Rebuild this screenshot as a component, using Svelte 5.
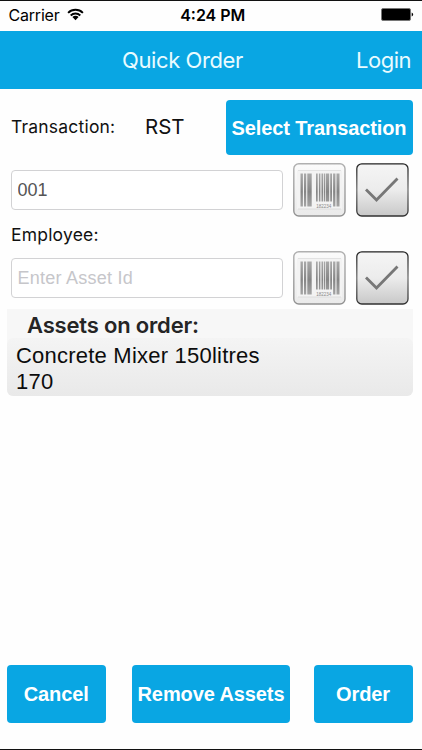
<script>
  let transaction = $state('001');
  let asset = $state('');
  const bars = [
    [7.5, 2.4, 33], [11, 2.2, 33], [14.3, 4.4, 33], [23, 1.7, 28], [25.9, 1.5, 28],
    [28.5, 1.7, 28], [31, 1.2, 28], [32.9, 3.3, 28], [37.2, 1.8, 28],
    [40.1, 2.3, 33], [43.5, 3, 33]
  ];
</script>

{#snippet scan()}
  <button class="tool scan" aria-label="Scan barcode">
    <svg width="53" height="54" viewBox="0 0 53 54">
      <defs>
        <linearGradient id="ink" gradientUnits="userSpaceOnUse" x1="0" y1="10" x2="0" y2="44">
          <stop offset="0" stop-color="#aaa" /><stop offset=".55" stop-color="#858585" /><stop offset="1" stop-color="#a5a5a5" />
        </linearGradient>
        <linearGradient id="edge" x1="0" y1="0" x2="0" y2="1">
          <stop offset="0" stop-color="#b0b0b0" /><stop offset="1" stop-color="#929292" />
        </linearGradient>
        <linearGradient id="face" x1="0" y1="0" x2="0" y2="1">
          <stop offset="0" stop-color="#fbfbfb" /><stop offset="1" stop-color="#eaeaea" />
        </linearGradient>
      </defs>
      <rect x=".8" y=".8" width="51.2" height="52.2" rx="5" fill="url(#face)" stroke="url(#edge)" stroke-width="1.4" />
      <path d="M4 7.5h45v38.5H4z" fill="#f3f3f3" />
      <path d="M5 7.5h43" stroke="#e2e2e2" />
      <path d="M5 46h43" stroke="#dcdcdc" />
      {#each bars as [x, w, h]}
        <rect {x} y="10.5" width={w} height={h} fill="url(#ink)" />
      {/each}
      <text x="23.3" y="44.5" textLength="15" lengthAdjust="spacingAndGlyphs">182234</text>
    </svg>
  </button>
{/snippet}

{#snippet confirm()}
  <button class="tool confirm" aria-label="Confirm">
    <svg width="53" height="54" viewBox="0 0 53 54">
      <defs>
        <linearGradient id="tile" x1="0" y1="0" x2="0" y2="1">
          <stop offset="0" stop-color="#f5f5f5" /><stop offset=".5" stop-color="#ececec" /><stop offset="1" stop-color="#c8c8c8" />
        </linearGradient>
        <linearGradient id="rim" x1="0" y1="0" x2="0" y2="1">
          <stop offset="0" stop-color="#222" /><stop offset=".5" stop-color="#707070" /><stop offset="1" stop-color="#303030" />
        </linearGradient>
      </defs>
      <rect x=".8" y=".8" width="51.2" height="52.2" rx="5" fill="url(#tile)" stroke="url(#rim)" stroke-width="1.3" />
      <path d="M10 26.5 20.5 37 41.5 15.5" fill="none" stroke="#777" stroke-width="2.8" />
    </svg>
  </button>
{/snippet}

<div class="screen">
  <div class="status">
    <div class="carrier">
      <span>Carrier</span>
      <svg width="17" height="13" viewBox="0 0 17 13">
        <g fill="none" stroke="#000" stroke-width="1.9">
          <path d="M1.1 4.8a10.5 10.5 0 0 1 14.8 0" />
          <path d="M3.7 7.5a6.8 6.8 0 0 1 9.6 0" />
        </g>
        <path d="M5.4 9.1a4.4 4.4 0 0 1 6.2 0L8.5 12.2z" />
      </svg>
    </div>
    <time>4:24 PM</time>
    <svg class="battery" width="33" height="14" viewBox="0 0 33 14">
      <rect x=".5" y=".5" width="29" height="12" rx="1.5" stroke="#777" />
      <path d="M30.7 4.5q1.4.5 1.4 2t-1.4 2z" />
    </svg>
  </div>

  <header>
    <h1>Quick Order</h1>
    <span class="login">Login</span>
  </header>

  <main>
    <div class="transaction">
      <label for="transaction">Transaction:</label>
      <span class="code">RST</span>
      <button class="primary select"><span>Select Transaction</span></button>
    </div>
    <div class="entry">
      <input id="transaction" bind:value={transaction} />
      {@render scan()}
      {@render confirm()}
    </div>
    <label class="employee" for="asset">Employee:</label>
    <div class="entry">
      <input id="asset" placeholder="Enter Asset Id" bind:value={asset} />
      {@render scan()}
      {@render confirm()}
    </div>
    <section>
      <h2>Assets on order:</h2>
      <div class="item">
        <div class="name">Concrete Mixer 150litres</div>
        <div class="number">170</div>
      </div>
    </section>
  </main>

  <footer>
    <button class="primary cancel"><span>Cancel</span></button>
    <button class="primary remove"><span>Remove Assets</span></button>
    <button class="primary order"><span>Order</span></button>
  </footer>
</div>

<style>
  :global(body) { margin: 0; background: #fff; }
  * { box-sizing: border-box; }
  .screen {
    width: 422px; height: 750px; display: flex; flex-direction: column;
    border-top: 1px solid #111; border-bottom: 1px solid #111;
    background: #fefefe; color: #111; white-space: nowrap;
    font-family: "Liberation Sans", Arial, sans-serif;
  }
  button { padding: 0; border: 0; font-family: inherit; }
  .status {
    height: 30px; display: grid; grid-template-columns: 1fr auto 1fr; align-items: center;
    padding: 0 8px 0 8.5px; font: 16px/28px Inter, sans-serif; color: #000;
  }
  .carrier { display: flex; align-items: center; gap: 7px; height: 28px; align-self: start; letter-spacing: -.2px; }
  .carrier svg { margin-top: -2px; }
  time { font-weight: 600; align-self: start; padding-left: 3px; letter-spacing: 0; }
  .battery { justify-self: end; margin: 0 0 3px; }
  header {
    height: 58px; flex: none; background: #09a6e3; color: #e9fbff;
    display: flex; align-items: center; justify-content: space-between;
    padding: 0 11px 0 122px; font: 22px/58px Inter, sans-serif; letter-spacing: -.4px;
  }
  h1 { margin: 0; font: inherit; }
  .login { letter-spacing: -.5px; }
  main { flex: 1; padding-top: 11px; }
  .transaction { display: flex; align-items: center; height: 55px; padding: 0 9.5px 0 11px; }
  label { font: 17.5px/20px Inter, sans-serif; letter-spacing: .2px; }
  .transaction label { width: 134px; margin-bottom: 2px; }
  .code { font: 20.5px/24px Inter, sans-serif; margin-bottom: 2px; }
  .primary {
    display: flex; align-items: center; justify-content: center;
    background: #09a6e3; color: #fff; border-radius: 4px;
    font-size: 20px; font-weight: 700; line-height: 24px; letter-spacing: -.1px;
  }
  .select { width: 187px; height: 55px; margin-left: auto; }
  .entry { display: flex; align-items: center; height: 54px; padding-left: 11px; }
  .transaction + .entry { margin-top: 8px; }
  input {
    width: 272px; height: 40px; border: 1px solid #d2d2d4; border-radius: 4px;
    padding: 0 5.5px; margin: 0 9.5px 0 0; background: #fff; color: #555; outline: 0;
    font: 18px "Liberation Sans", Arial, sans-serif;
  }
  input::placeholder { color: #c6c6ca; opacity: 1; letter-spacing: .25px; }
  .tool { display: block; width: 53px; height: 54px; background: transparent; }
  .tool svg { display: block; }
  .scan { margin-right: 10px; }
  .scan text { font: 5px "Liberation Sans", sans-serif; fill: #888; }
  .employee { display: block; height: 34px; padding: 8px 0 0 11px; }
  section { margin: 4px 9.5px 0 7px; background: #f7f7f7; border-radius: 0 0 6px 6px; }
  h2 { margin: 0; height: 29px; padding-left: 20px; font: 600 22px/32px Inter, sans-serif; letter-spacing: -.18px; color: #252525; }
  .item {
    height: 58px; border-radius: 6px; padding: 5px 9px; color: #0c0c0c;
    background: linear-gradient(#f4f4f4, #e9e9e9); font-size: 22px; line-height: 26px; letter-spacing: .22px;
  }
  footer { display: flex; align-items: stretch; height: 58px; margin: 0 9.5px 26px 7px; }
  .cancel { width: 98.5px; margin-right: 26.5px; }
  .remove { width: 158px; margin-right: 23.5px; }
  .order { width: 99px; }
</style>
